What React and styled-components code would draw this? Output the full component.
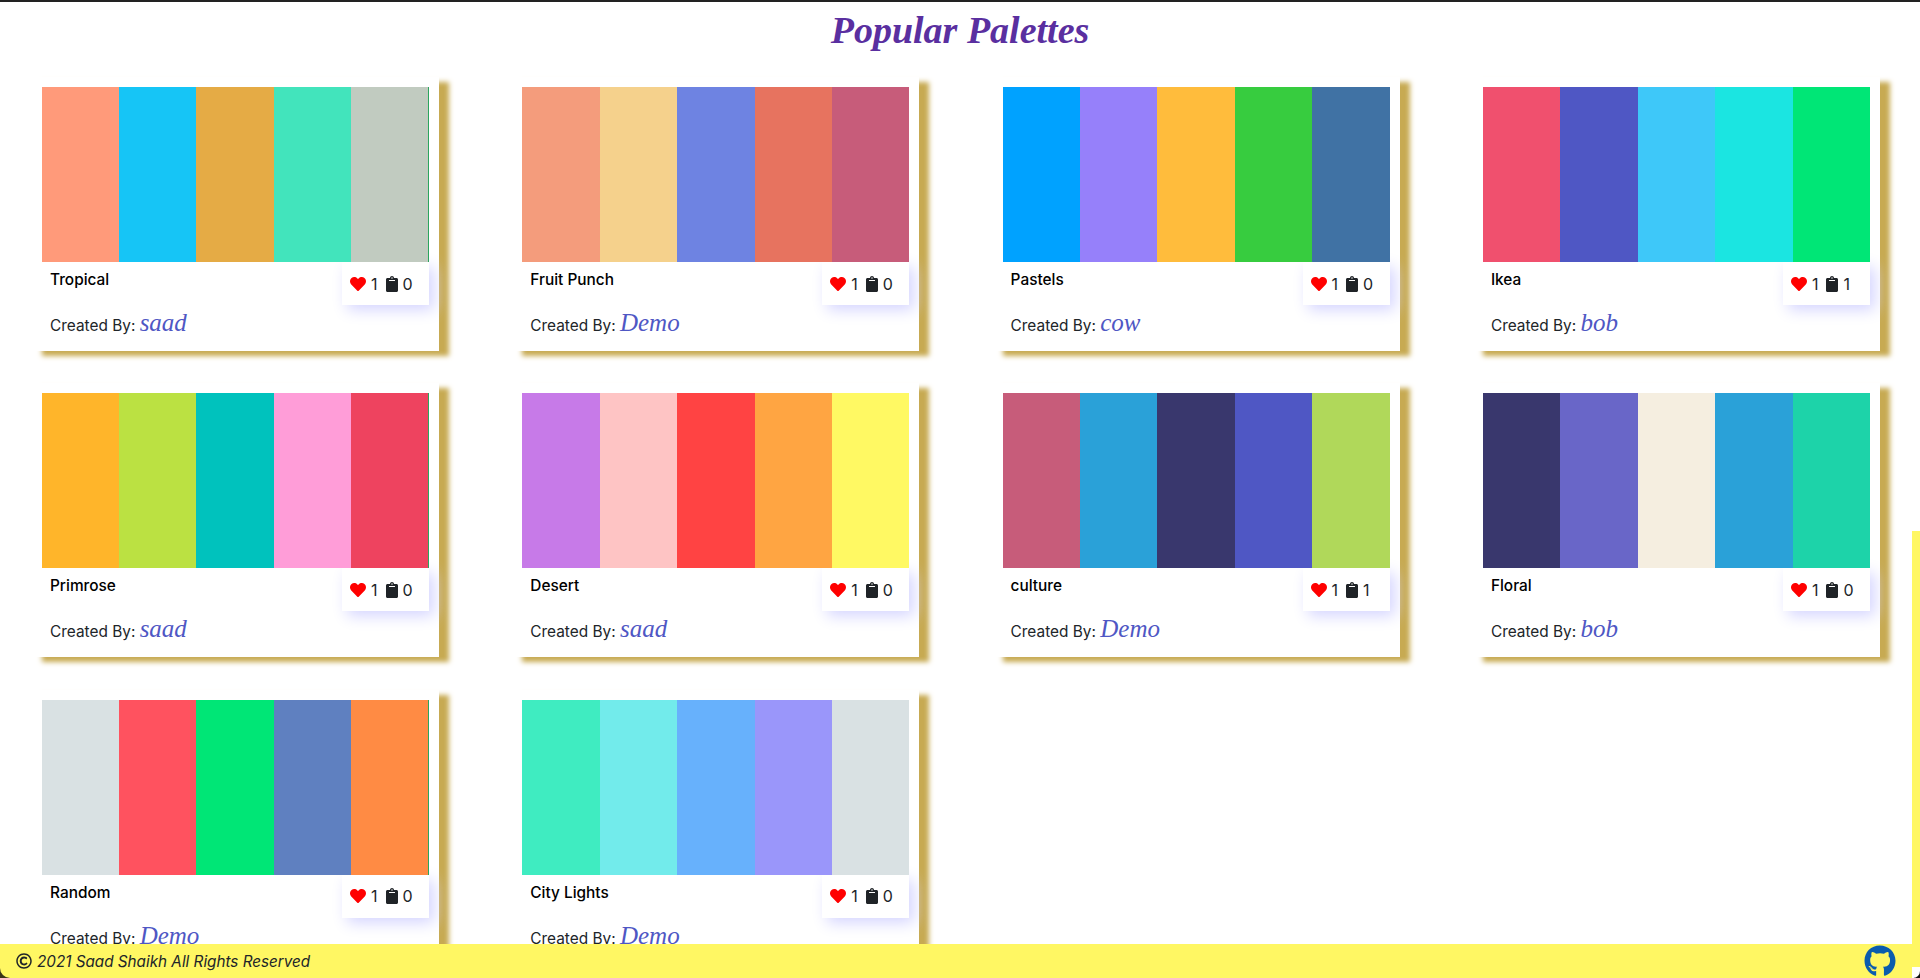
import React from 'react';
import styled, { createGlobalStyle } from 'styled-components';
import { FaHeart, FaClipboard, FaGithub, FaRegCopyright } from 'react-icons/fa';

const palettes = [
  { name: 'Tropical', author: 'saad', saves: 0, edge: true, colors: ['#ff9a7a', '#16c5f6', '#e5ab45', '#42e4bc', '#c1cbc0'] },
  { name: 'Fruit Punch', author: 'Demo', saves: 0, colors: ['#f49c7c', '#f5d18c', '#6e83e2', '#e7735f', '#c75c7a'] },
  { name: 'Pastels', author: 'cow', saves: 0, colors: ['#00a2ff', '#9680fa', '#ffbc3c', '#37cc3f', '#4072a4'] },
  { name: 'Ikea', author: 'bob', saves: 1, colors: ['#f0506e', '#4f57c4', '#3ec8f9', '#1be5e1', '#00e676'] },
  { name: 'Primrose', author: 'saad', saves: 0, edge: true, colors: ['#ffb52a', '#bbe142', '#00c2bd', '#ff9dd8', '#ee435f'] },
  { name: 'Desert', author: 'saad', saves: 0, colors: ['#c77ae8', '#fec4c4', '#ff4343', '#ffa542', '#fff963'] },
  { name: 'culture', author: 'Demo', saves: 1, colors: ['#c75c7a', '#2aa1d8', '#39376d', '#4f57c4', '#b0d85a'] },
  { name: 'Floral', author: 'bob', saves: 0, colors: ['#39376d', '#6966c8', '#f5eee0', '#2aa1d8', '#1dd3a9'] },
  { name: 'Random', author: 'Demo', saves: 0, edge: true, colors: ['#d9e1e3', '#ff525f', '#00e676', '#5f80c0', '#ff8b44'] },
  { name: 'City Lights', author: 'Demo', saves: 0, colors: ['#3fecc1', '#72ebeb', '#67b1fc', '#9a96fa', '#d9e1e3'] },
];

function App() {
  return (
    <>
      <GlobalStyle />
      <TopLine />
      <Title>Popular Palettes</Title>
      <Grid>
        {palettes.map((item) => (
          <Card key={item.name}>
            <Swatches $edge={item.edge}>
              {item.colors.map((color, index) => (
                <Swatch key={index} $color={color} />
              ))}
            </Swatches>
            <Info>
              <Details>
                <PaletteName>{item.name}</PaletteName>
                <CreatedBy>
                  Created By: <Author>{item.author}</Author>
                </CreatedBy>
              </Details>
              <Stats>
                <HeartIcon />
                <Count>1</Count>
                <ClipIcon />
                <Count>{item.saves}</Count>
              </Stats>
            </Info>
          </Card>
        ))}
      </Grid>
      <ScrollStrip />
      <CornerLeft />
      <Footer>
        <Copy>
          <FaRegCopyright size={16} />
          <span>2021 Saad Shaikh All Rights Reserved</span>
        </Copy>
        <FaGithub size={32} color="#0b5cad" />
      </Footer>
      <CornerRight />
    </>
  );
}

const GlobalStyle = createGlobalStyle`
  html, body {
    margin: 0;
    height: 100%;
    overflow: hidden;
    background: #fff;
    font-family: Inter, "Liberation Sans", sans-serif;
    color: #212529;
  }
`;

const TopLine = styled.div`
  height: 2px;
  background: #222;
`;

const Title = styled.h1`
  height: 75px;
  margin: 0;
  padding-top: 6px;
  box-sizing: border-box;
  text-align: center;
  font-family: "Liberation Serif", serif;
  font-style: italic;
  font-weight: 700;
  font-size: 38px;
  line-height: 44px;
  color: #5a2fa0;
`;

const Grid = styled.div`
  display: grid;
  grid-template-columns: repeat(4, 480.3px);
`;

const Card = styled.div`
  width: 407px;
  height: 274px;
  margin: 0 41.3px 32.4px 32px;
  padding: 10px;
  box-sizing: border-box;
  background: #fff;
  box-shadow: 10px 5px 5px #c7aa52;
`;

const Swatches = styled.div`
  position: relative;
  z-index: 1;
  display: flex;
  height: 175px;
  background: #2ca55e;
  padding-right: ${(props) => (props.$edge ? '1px' : '0')};
`;

const Swatch = styled.div`
  flex: 1;
  background: ${(props) => props.$color};
`;

const Info = styled.div`
  display: flex;
  justify-content: space-between;
  align-items: flex-start;
`;

const Details = styled.div`
  padding: 8px 0 0 8px;
`;

const PaletteName = styled.div`
  font-size: 15.4px;
  font-weight: 500;
  line-height: 20px;
  color: #000;
`;

const CreatedBy = styled.div`
  margin-top: 19px;
  font-size: 15.4px;
  line-height: 28px;
`;

const Author = styled.span`
  font-family: "Liberation Serif", serif;
  font-style: italic;
  font-size: 25px;
  color: #4f57c4;
`;

const Stats = styled.div`
  display: flex;
  align-items: center;
  width: 87px;
  height: 43px;
  padding-left: 8px;
  box-sizing: border-box;
  background: #fff;
  box-shadow: 5px 5px 15px #d5d5ff;
  font-size: 16px;
`;

const HeartIcon = styled(FaHeart)`
  width: 16px;
  height: 16px;
  color: #ff0000;
`;

const ClipIcon = styled(FaClipboard)`
  width: 12px;
  height: 16px;
  margin-left: 8px;
  color: #1f2327;
`;

const Count = styled.span`
  margin-left: 5px;
`;

const ScrollStrip = styled.div`
  position: fixed;
  top: 531px;
  right: 0;
  bottom: 0;
  width: 8px;
  background: #fff763;
`;

const CornerLeft = styled.div`
  position: fixed;
  left: 0;
  bottom: 0;
  width: 10px;
  height: 10px;
  background: #3a3418;
`;

const Footer = styled.footer`
  position: fixed;
  left: 0;
  right: 0;
  bottom: 0;
  height: 34px;
  display: flex;
  align-items: center;
  justify-content: space-between;
  padding: 0 24px 0 16px;
  box-sizing: border-box;
  background: #fff763;
  border-bottom-left-radius: 10px;
  overflow: hidden;
  z-index: 2;
`;

const Copy = styled.div`
  display: flex;
  align-items: center;
  gap: 5px;
  font-size: 15.25px;
  font-style: italic;
`;

const CornerRight = styled.div`
  position: fixed;
  right: 0;
  bottom: 0;
  width: 8px;
  height: 11px;
  background: #fff;
  border-bottom-right-radius: 7px;
  box-shadow: 2px 2px 0 #111;
  z-index: 3;
`;

export default App;
